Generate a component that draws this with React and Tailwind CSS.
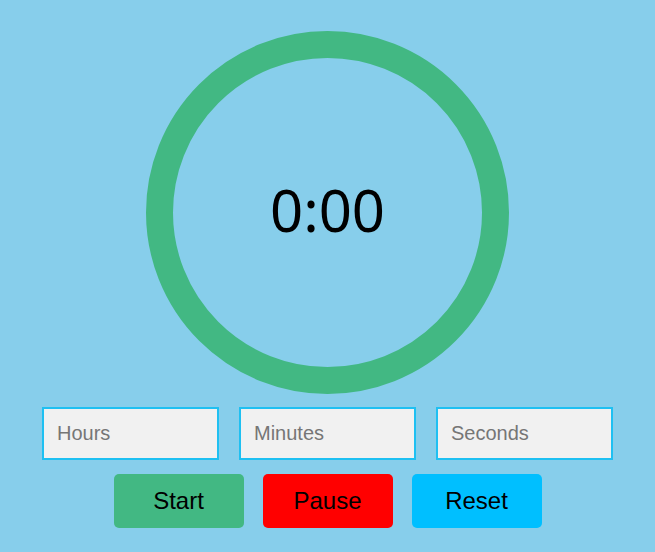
import React, { useState } from "react";

const App = () => {
    const [hours, setHours] = useState("");
    const [minutes, setMinutes] = useState("");
    const [seconds, setSeconds] = useState("");

    return (
        <div className="min-h-screen w-full bg-[#87ceeb] flex flex-col items-center pt-[31px] font-['Liberation_Sans',Arial,sans-serif]">
            {/* Timer ring */}
            <div className="w-[363px] h-[363px] rounded-full border-[27px] border-[#42b883] flex items-center justify-center">
                <span className="text-[58px] leading-none text-black font-['Noto_Sans',sans-serif] -mt-[6px]">
                    0:00
                </span>
            </div>

            {/* Inputs */}
            <div className="flex gap-[20px] mt-[13px]">
                {[
                    { label: "Hours", value: hours, set: setHours },
                    { label: "Minutes", value: minutes, set: setMinutes },
                    { label: "Seconds", value: seconds, set: setSeconds },
                ].map(({ label, value, set }) => (
                    <input
                        key={label}
                        type="number"
                        placeholder={label}
                        value={value}
                        onChange={(e) => set(e.target.value)}
                        className="w-[177px] h-[53px] border-2 border-[#1ec0f2] bg-[#f1f1f1] px-[13px] text-[20px] text-black placeholder:text-[#767676] outline-none"
                    />
                ))}
            </div>

            {/* Buttons */}
            <div className="flex gap-[19px] mt-[14px]">
                <button className="w-[130px] h-[54px] rounded-[5px] bg-[#42b883] text-[24px] text-black">
                    Start
                </button>
                <button className="w-[130px] h-[54px] rounded-[5px] bg-[#ff0000] text-[24px] text-black">
                    Pause
                </button>
                <button className="w-[130px] h-[54px] rounded-[5px] bg-[#00bfff] text-[24px] text-black">
                    Reset
                </button>
            </div>
        </div>
    );
};

export default App;
